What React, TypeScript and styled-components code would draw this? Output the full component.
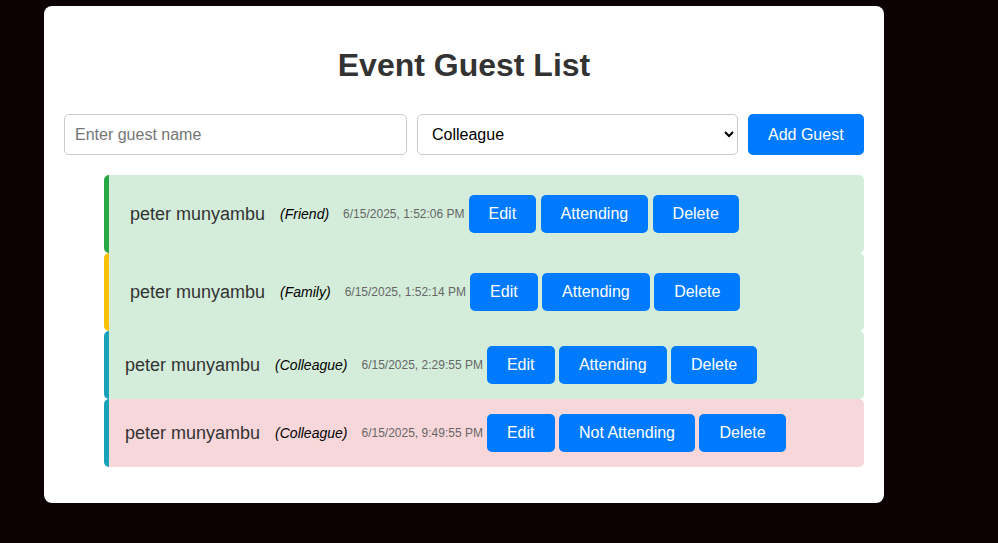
import React from "react";
import styled, { createGlobalStyle } from "styled-components";

const GlobalStyle = createGlobalStyle`
  html, body {
    margin: 0;
    padding: 0;
    background: #0c0204;
    font-family: "Liberation Sans", Arial, sans-serif;
  }
`;

const Page = styled.div`
  padding: 6px 0 40px 44px;
  min-height: 543px;
  box-sizing: border-box;
`;

const Card = styled.div`
  width: 840px;
  box-sizing: border-box;
  background: #ffffff;
  border-radius: 8px;
  padding: 20px 20px 20px;
`;

const Title = styled.h1`
  margin: 21px 0 30px;
  font-size: 32px;
  line-height: 37px;
  font-weight: bold;
  text-align: center;
  color: #333333;
`;

const Form = styled.form`
  display: flex;
  gap: 10px;
  margin: 0;
`;

const NameInput = styled.input`
  width: 343px;
  height: 41px;
  box-sizing: border-box;
  padding: 10px;
  border: 1px solid #cccccc;
  border-radius: 5px;
  font-family: "Liberation Sans", Arial, sans-serif;
  font-size: 16px;
  color: #000;
  &::placeholder {
    color: #757575;
  }
`;

const RoleSelect = styled.select`
  width: 321px;
  height: 41px;
  box-sizing: border-box;
  padding: 0 10px;
  border: 1px solid #cccccc;
  border-radius: 5px;
  background: #ffffff;
  font-family: "Liberation Sans", Arial, sans-serif;
  font-size: 16px;
  color: #000;
`;

const Button = styled.button<{ $h?: number }>`
  flex: none;
  height: ${(p) => (p.$h ? `${p.$h}px` : "38px")};
  padding: 0 20px;
  border: none;
  border-radius: 5px;
  background: #007bff;
  color: #ffffff;
  font-family: "Liberation Sans", Arial, sans-serif;
  font-size: 16px;
  cursor: pointer;
  white-space: nowrap;
`;

const List = styled.ul`
  list-style: none;
  margin: 20px 0 16px;
  padding: 0 0 0 40px;
`;

const Item = styled.li<{ $bg: string; $accent: string; $pad: number }>`
  display: flex;
  align-items: center;
  background: ${(p) => p.$bg};
  border-left: 5px solid ${(p) => p.$accent};
  border-radius: 5px;
  padding: ${(p) => p.$pad}px ${(p) => p.$pad}px ${(p) => p.$pad}px
    ${(p) => p.$pad + 1}px;
`;

const Name = styled.span`
  font-size: 18px;
  color: #333333;
  margin-right: 15px;
  white-space: nowrap;
`;

const Role = styled.em`
  font-size: 14px;
  color: #000000;
  margin-right: 14px;
  white-space: nowrap;
`;

const Stamp = styled.small`
  font-size: 12px;
  color: #666666;
  margin-right: 4px;
  white-space: nowrap;
`;

const Actions = styled.div`
  display: flex;
  gap: 4.45px;
`;

type Guest = {
  name: string;
  role: string;
  time: string;
  attending: boolean;
  accent: string;
  pad: number;
};

const guests: Guest[] = [
  { name: "peter munyambu", role: "Friend", time: "6/15/2025, 1:52:06 PM", attending: true, accent: "#28a745", pad: 20 },
  { name: "peter munyambu", role: "Family", time: "6/15/2025, 1:52:14 PM", attending: true, accent: "#ffc107", pad: 20 },
  { name: "peter munyambu", role: "Colleague", time: "6/15/2025, 2:29:55 PM", attending: true, accent: "#17a2b8", pad: 15 },
  { name: "peter munyambu", role: "Colleague", time: "6/15/2025, 9:49:55 PM", attending: false, accent: "#17a2b8", pad: 15 },
];

export default function App() {
  return (
    <>
      <GlobalStyle />
      <Page>
        <Card>
          <Title>Event Guest List</Title>
          <Form onSubmit={(e) => e.preventDefault()}>
            <NameInput placeholder="Enter guest name" />
            <RoleSelect defaultValue="Colleague">
              <option>Friend</option>
              <option>Family</option>
              <option>Colleague</option>
            </RoleSelect>
            <Button type="submit" $h={41}>Add Guest</Button>
          </Form>
          <List>
            {guests.map((g, i) => (
              <Item
                key={i}
                $bg={g.attending ? "#d4edda" : "#f8d7da"}
                $accent={g.accent}
                $pad={g.pad}
              >
                <Name>{g.name}</Name>
                <Role>({g.role})</Role>
                <Stamp>{g.time}</Stamp>
                <Actions>
                  <Button>Edit</Button>
                  <Button>{g.attending ? "Attending" : "Not Attending"}</Button>
                  <Button>Delete</Button>
                </Actions>
              </Item>
            ))}
          </List>
        </Card>
      </Page>
    </>
  );
}
